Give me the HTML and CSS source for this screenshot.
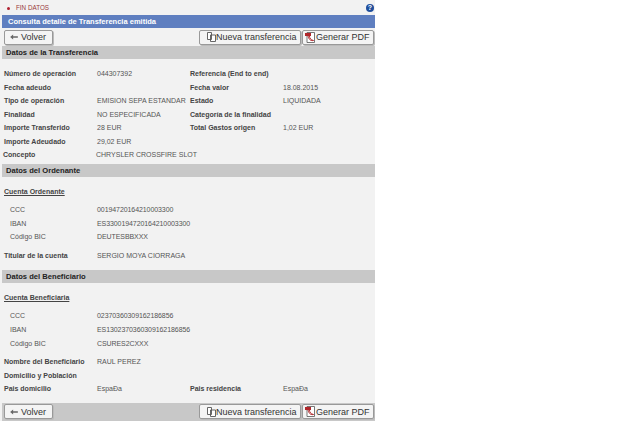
FILE: index.html
```html
<!DOCTYPE html>
<html lang="es">
<head>
<meta charset="utf-8">
<title>Consulta detalle de Transferencia emitida</title>
<link rel="stylesheet" href="styles.css">
</head>
<body>
<main class="page">
  <div class="topbar">
    <span class="status"><span class="dot"></span>FIN DATOS</span>
    <svg class="help" width="8" height="8" viewBox="0 0 8 8"><circle cx="4" cy="4" r="4" fill="#1f4e9c"/><text x="4" y="6.4" text-anchor="middle" class="help-q">?</text></svg>
  </div>
  <h1 class="title">Consulta detalle de Transferencia emitida</h1>
  <div class="toolbar">
    <button class="btn btn-back"><svg width="8" height="6" viewBox="0 0 9 7"><path d="M0 3.5 3.5 0.5V2.500H9V4.500H3.500V6.500Z" fill="#666"/></svg>Volver</button>
    <span class="spacer"></span>
    <button class="btn btn-new"><svg width="9" height="10" viewBox="0 0 9 10"><path d="M.5.5H4.500V7.500H.5ZM3.500 3H8.500V9.500H3.500Z" fill="#fff" stroke="#555" stroke-width=".9"/></svg>Nueva transferencia</button>
    <button class="btn btn-pdf"><svg width="10" height="11" viewBox="0 0 10 11"><path d="M2 .5H9.500V10.500H2Z" fill="#fff" stroke="#555" stroke-width=".8"/><path d="M0 1H6V4H0Z" fill="#b0262a"/><path d="M3 4C4 8 6 9 8.500 8.500 6 8 4.500 6.500 4.500 4" fill="none" stroke="#b0262a"/></svg>Generar PDF</button>
  </div>

  <h2 class="section">Datos de la Transferencia</h2>
  <div class="grid first">
    <b>Número de operación</b><span>044307392</span><b>Referencia (End to end)</b><span></span>
    <b>Fecha adeudo</b><span></span><b>Fecha valor</b><span>18.08.2015</span>
    <b>Tipo de operación</b><span>EMISION SEPA ESTANDAR</span><b>Estado</b><span>LIQUIDADA</span>
    <b>Finalidad</b><span>NO ESPECIFICADA</span><b>Categoría de la finalidad</b><span></span>
    <b>Importe Transferido</b><span>28 EUR</span><b>Total Gastos origen</b><span>1,02 EUR</span>
    <b>Importe Adeudado</b><span>29,02 EUR</span><span></span><span></span>
  </div>
  <div class="concept"><b>Concepto</b><span>CHRYSLER CROSSFIRE SLOT</span></div>

  <h2 class="section">Datos del Ordenante</h2>
  <h3 class="account">Cuenta Ordenante</h3>
  <div class="bank">
    <span>CCC</span><span>00194720164210003300</span>
    <span>IBAN</span><span>ES3300194720164210003300</span>
    <span>Código BIC</span><span>DEUTESBBXXX</span>
  </div>
  <div class="grid holder">
    <b>Titular de la cuenta</b><span>SERGIO MOYA CIORRAGA</span>
  </div>

  <h2 class="section">Datos del Beneficiario</h2>
  <h3 class="account">Cuenta Beneficiaria</h3>
  <div class="bank">
    <span>CCC</span><span>02370360309162186856</span>
    <span>IBAN</span><span>ES1302370360309162186856</span>
    <span>Código BIC</span><span>CSURES2CXXX</span>
  </div>
  <div class="grid holder holder-last">
    <b>Nombre del Beneficiario</b><span>RAUL PEREZ</span><span></span><span></span>
    <b>Domicilio y Población</b><span></span><span></span><span></span>
    <b>Pais domicilio</b><span>EspaÐa</span><b>Pais residencia</b><span>EspaÐa</span>
  </div>

  <div class="toolbar footer">
    <button class="btn btn-back"><svg width="8" height="6" viewBox="0 0 9 7"><path d="M0 3.5 3.5 0.5V2.500H9V4.500H3.500V6.500Z" fill="#666"/></svg>Volver</button>
    <span class="spacer"></span>
    <button class="btn btn-new"><svg width="9" height="10" viewBox="0 0 9 10"><path d="M.5.5H4.500V7.500H.5ZM3.500 3H8.500V9.500H3.500Z" fill="#fff" stroke="#555" stroke-width=".9"/></svg>Nueva transferencia</button>
    <button class="btn btn-pdf"><svg width="10" height="11" viewBox="0 0 10 11"><path d="M2 .5H9.500V10.500H2Z" fill="#fff" stroke="#555" stroke-width=".8"/><path d="M0 1H6V4H0Z" fill="#b0262a"/><path d="M3 4C4 8 6 9 8.500 8.500 6 8 4.500 6.500 4.500 4" fill="none" stroke="#b0262a"/></svg>Generar PDF</button>
  </div>
</main>
</body>
</html>
```
FILE: styles.css
```css
html, body { margin: 0; padding: 0; background: #fff; }
body { font: 7px/13.6px "Liberation Sans", Arial, sans-serif; color: #555; }
.page { width: 375px; height: 421px; background: #f2f2f2; padding-left: 2px; box-sizing: border-box; }
.topbar { height: 15px; display: flex; align-items: center; justify-content: space-between; padding: 1px 1px 0 5px; box-sizing: border-box; color: #9a3a3a; font-size: 6.3px; }
.status { display: flex; align-items: center; gap: 6px; }
.dot { width: 3px; height: 3px; border-radius: 50%; background: #b02030; }
.help-q { font: bold 7px "Liberation Sans", sans-serif; fill: #fff; }
.title { margin: 0; height: 13px; padding-left: 6px; background: #5f7fc0; color: #fff; font-size: 7.5px; line-height: 13px; font-weight: bold; }
.toolbar { height: 18px; display: flex; align-items: center; gap: 1px; }
.spacer { flex: 1; }
.btn { height: 15px; margin: 0; display: flex; align-items: center; background: #f4f4f4; border: 1px solid #999; border-radius: 2px; box-shadow: 1px 1px 0 #bbb; font: 9px "Liberation Sans", sans-serif; color: #333; white-space: nowrap; box-sizing: border-box; }
.btn-back { width: 49px; margin-left: 2px; padding: 0 0 0 5px; gap: 3px; }
.btn-new { width: 102px; padding: 0 0 0 7px; gap: 0; }
.btn-pdf { width: 72px; padding: 0 0 0 2px; gap: 1px; margin-right: 1px; }
.section { margin: 0; height: 13px; padding-left: 4px; background: #c8c8c8; color: #222; font-size: 7.6px; line-height: 13px; font-weight: bold; }
.grid { display: grid; grid-template-columns: 93px 93px 93px 1fr; padding-left: 2px; }
.grid.first { padding-top: 8px; }
.grid b { font-weight: bold; color: #444; }
.grid span, .concept span, .bank span { white-space: nowrap; }
.concept { display: grid; grid-template-columns: 93px 1fr; padding-left: 1px; line-height: 12px; }
.concept b { color: #444; }
.concept + .section { margin-top: 3.4px; }
.account { margin: 0; padding: 8px 0 4px 2px; font-size: 7px; line-height: 14px; font-weight: bold; color: #444; text-decoration: underline; }
.bank { display: grid; grid-template-columns: 87px 1fr; padding-left: 8px; }
.bank span:nth-child(even) { letter-spacing: -.08px; }
.holder { padding-top: 5px; padding-bottom: 8px; }
.holder-last { padding-bottom: 7px; }
.footer { background: #c8c8c8; }
```
